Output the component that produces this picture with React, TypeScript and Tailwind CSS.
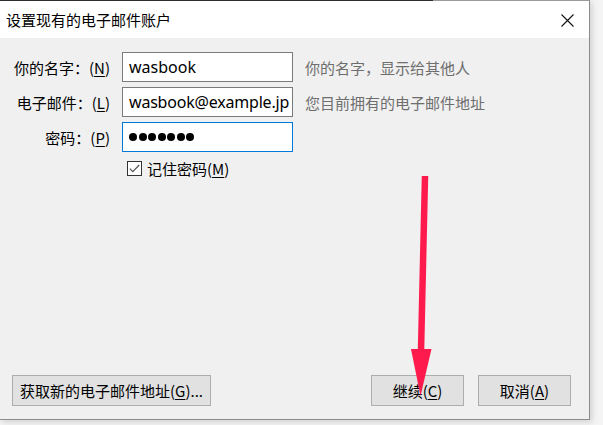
import React from "react";

const cjk = { fontFamily: '"Noto Sans CJK SC", "Noto Sans", sans-serif' };

function U({ c }: { c: string }) {
  return <span className="underline underline-offset-2">{c}</span>;
}

function Row({
  label,
  k,
  children,
  hint,
}: {
  label: string;
  k: string;
  children: React.ReactNode;
  hint?: string;
}) {
  return (
    <div className="flex items-center h-[30px]">
      <div className="w-[98px] text-right text-[15px] text-black whitespace-nowrap leading-none">
        {label}：(<U c={k} />)
      </div>
      <div className="ml-[12px]">{children}</div>
      {hint && (
        <div className="ml-[12px] text-[15px] text-[#6e6e6e] whitespace-nowrap leading-none">
          {hint}
        </div>
      )}
    </div>
  );
}

function Btn({ children, w }: { children: React.ReactNode; w: string }) {
  return (
    <div
      className={`${w} h-[31px] bg-[#e1e1e1] border border-[#adadad] flex items-center justify-center text-[15px] text-black whitespace-nowrap leading-none`}
    >
      {children}
    </div>
  );
}

export default function App() {
  return (
    <div className="relative w-[603px] h-[425px] bg-[#f4f4f4] overflow-hidden" style={cjk}>
      <div className="w-[590px] h-[420px] flex flex-col border-r border-b border-[#8c8c8c] shadow-[2px_2px_6px_rgba(0,0,0,0.15)]">
        <div className="flex h-[1px]">
          <div className="w-[433px] bg-[#2e2e2e]" />
          <div className="flex-1 bg-[#9a9a9a]" />
        </div>
        <div className="h-[37px] bg-white flex items-center justify-between pl-[6px] pr-[15px]">
          <div className="text-[15px] text-black leading-none">设置现有的电子邮件账户</div>
          <svg width="13" height="13" viewBox="0 0 13 13" className="mt-[1px]">
            <path d="M0.5 0.5 L12.5 12.5 M12.5 0.5 L0.5 12.5" stroke="#111" strokeWidth="1.1" fill="none" />
          </svg>
        </div>
        <div className="flex-1 bg-[#f0f0f0] flex flex-col pt-[14px] pl-[12px] pr-[18px] pb-[13px]">
          <div className="flex flex-col gap-[5px]">
            <Row label="你的名字" k="N" hint="你的名字，显示给其他人">
              <div className="w-[171px] h-[30px] bg-white border border-[#7a7a7a] flex items-center pl-[6px] text-[16px] text-black" style={{ fontFamily: '"Noto Sans", sans-serif' }}>
                wasbook
              </div>
            </Row>
            <Row label="电子邮件" k="L" hint="您目前拥有的电子邮件地址">
              <div className="w-[171px] h-[30px] bg-white border border-[#7a7a7a] flex items-center pl-[6px] text-[16px] text-black overflow-hidden whitespace-nowrap tracking-[-0.2px]" style={{ fontFamily: '"Noto Sans", sans-serif' }}>
                wasbook@example.jp
              </div>
            </Row>
            <Row label="密码" k="P">
              <div className="w-[171px] h-[30px] bg-white border border-[#0078d7] flex items-center pl-[6px] gap-[1.5px]">
                {Array.from({ length: 7 }).map((_, i) => (
                  <span key={i} className="w-[8px] h-[8px] rounded-full bg-black" />
                ))}
              </div>
            </Row>
          </div>
          <div className="flex items-center mt-[9px] ml-[115px]">
            <div className="w-[15px] h-[15px] border border-[#333] bg-white flex items-center justify-center">
              <svg width="11" height="9" viewBox="0 0 11 9">
                <path d="M0.8 4.6 L3.8 7.6 L10.2 1" stroke="#555" strokeWidth="1.2" fill="none" />
              </svg>
            </div>
            <div className="ml-[5px] text-[15px] text-black leading-none">
              记住密码(<U c="M" />)
            </div>
          </div>
          <div className="flex-1" />
          <div className="flex items-end">
            <Btn w="w-[199px]">
              获取新的电子邮件地址(<U c="G" />)...
            </Btn>
            <div className="flex-1" />
            <Btn w="w-[93px]">
              继续(<U c="C" />)
            </Btn>
            <div className="w-[14px]" />
            <Btn w="w-[93px]">
              取消(<U c="A" />)
            </Btn>
          </div>
        </div>
      </div>
      <svg className="absolute left-0 top-0 pointer-events-none" width="603" height="425" viewBox="0 0 603 425">
        <path d="M425 176 L421 352" stroke="#ff1a4d" strokeWidth="6.5" strokeLinecap="butt" fill="none" />
        <polygon points="411,349 431.5,349 420.5,396" fill="#ff1a4d" />
      </svg>
    </div>
  );
}
